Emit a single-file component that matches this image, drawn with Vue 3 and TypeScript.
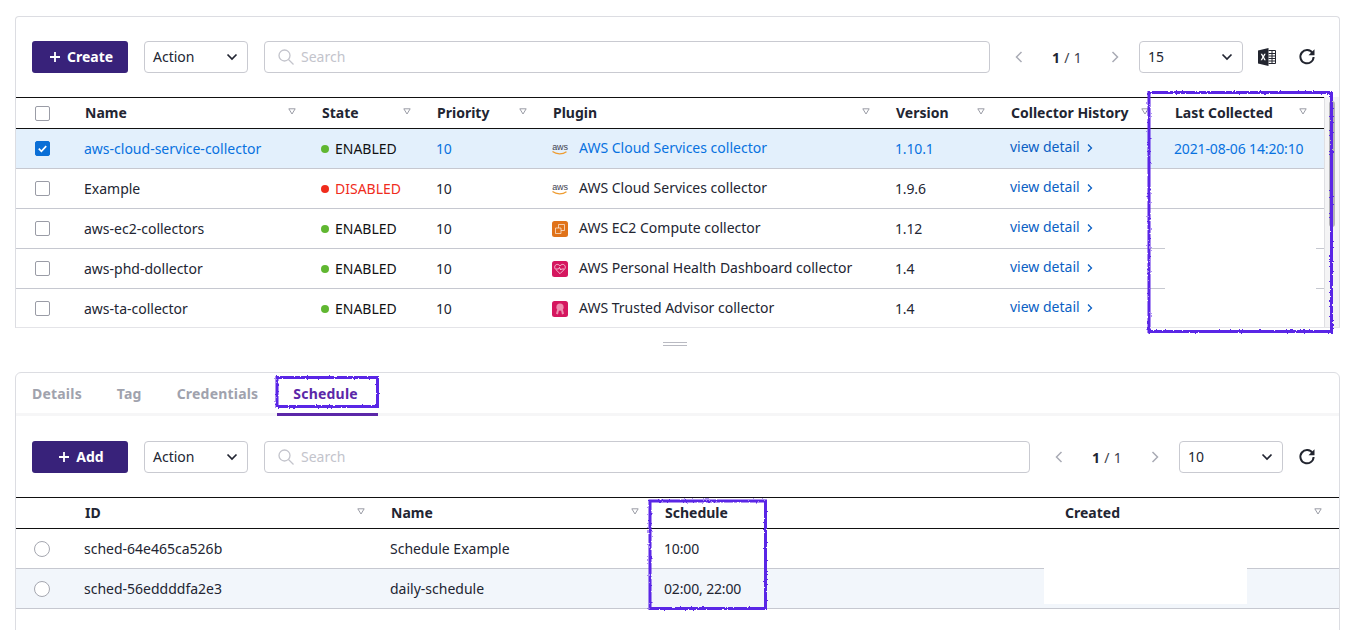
<script setup lang="ts">
type Plugin = 'aws' | 'ec2' | 'health' | 'advisor'

interface Collector {
  name: string
  state: string
  priority: number
  plugin: string
  icon: Plugin
  version: string
  last: string
  selected?: boolean
}

const collectors: Collector[] = [
  { name: 'aws-cloud-service-collector', state: 'ENABLED', priority: 10, plugin: 'AWS Cloud Services collector', icon: 'aws', version: '1.10.1', last: '2021-08-06 14:20:10', selected: true },
  { name: 'Example', state: 'DISABLED', priority: 10, plugin: 'AWS Cloud Services collector', icon: 'aws', version: '1.9.6', last: '' },
  { name: 'aws-ec2-collectors', state: 'ENABLED', priority: 10, plugin: 'AWS EC2 Compute collector', icon: 'ec2', version: '1.12', last: '' },
  { name: 'aws-phd-dollector', state: 'ENABLED', priority: 10, plugin: 'AWS Personal Health Dashboard collector', icon: 'health', version: '1.4', last: '' },
  { name: 'aws-ta-collector', state: 'ENABLED', priority: 10, plugin: 'AWS Trusted Advisor collector', icon: 'advisor', version: '1.4', last: '' },
]

const topHeaders = ['Name', 'State', 'Priority', 'Plugin', 'Version', 'Collector History', 'Last Collected']
const tabs = ['Details', 'Tag', 'Credentials', 'Schedule']

const schedules = [
  { id: 'sched-64e465ca526b', name: 'Schedule Example', time: '10:00' },
  { id: 'sched-56eddddfa2e3', name: 'daily-schedule', time: '02:00, 22:00' },
]
</script>

<template>
  <div class="page">
    <section class="card top-card">
      <div class="toolbar">
        <button class="btn">
          <svg class="plus" viewBox="0 0 10 10"><path d="M5 0v10M0 5h10" /></svg><span class="btn-label">Create</span>
        </button>
        <div class="select action">Action
          <svg class="caret" viewBox="0 0 12 8"><path d="M1.500 1.500 6 6l4.500-4.500" /></svg>
        </div>
        <div class="search">
          <svg class="lens" viewBox="0 0 18 18"><circle cx="7.500" cy="7.500" r="5.500" /><path d="m11.500 11.500 5 5" /></svg>
          Search
        </div>
        <div class="pager">
          <svg class="chev" viewBox="0 0 8 12"><path d="M6.500 1 1.500 6l5 5" /></svg>
          <span class="page-no"><b>1</b> / 1</span>
          <svg class="chev" viewBox="0 0 8 12"><path d="m1.500 1 5 5-5 5" /></svg>
        </div>
        <div class="select size">15
          <svg class="caret" viewBox="0 0 12 8"><path d="M1.500 1.500 6 6l4.500-4.500" /></svg>
        </div>
        <svg class="excel" viewBox="0 0 18 18">
          <path fill="#22252f" d="M0 2.400 10.500 0v18L0 15.600z" />
          <path fill="#fff" d="M2.700 5.800h1.500l1 2 1-2h1.500L6 9l1.800 3.200H6.300l-1.100-2.100-1.100 2.100H2.600L4.400 9z" />
          <path fill="none" stroke="#22252f" stroke-width="1" d="M10.500 2.500h7v13h-7M10.500 5.500h7M10.500 8h7M10.500 10.500h7M10.500 13h7M14 2.500v13" />
        </svg>
        <svg class="refresh" viewBox="0 0 18 18">
          <path d="M14.600 5.200A6.600 6.600 0 1 0 15.600 9" />
          <path class="head" d="M16.500 1.200v6h-6z" />
        </svg>
      </div>

      <div class="table-wrap">
        <div class="table-clip">
          <table class="grid">
            <colgroup>
              <col style="width: 53px" /><col style="width: 237px" /><col style="width: 115px" /><col style="width: 116px" />
              <col style="width: 343px" /><col style="width: 115px" /><col style="width: 164px" /><col />
            </colgroup>
            <thead>
              <tr>
                <th class="check-cell"><span class="check"></span></th>
                <th v-for="h in topHeaders" :key="h" :class="{ 'last-head': h === 'Last Collected' }">
                  <div class="th-in">
                    <span>{{ h }}</span>
                    <svg class="sort" viewBox="0 0 8 7"><path d="M.8.8h6.400L4 6z" /></svg>
                  </div>
                </th>
              </tr>
            </thead>
            <tbody>
              <tr v-for="c in collectors" :key="c.name" :class="{ selected: c.selected }">
                <td class="check-cell">
                  <span class="check" :class="{ on: c.selected }">
                    <svg v-if="c.selected" viewBox="0 0 14 14"><path d="m3 7.200 2.800 2.800L11 4.400" /></svg>
                  </span>
                </td>
                <td>{{ c.name }}</td>
                <td>
                  <span class="dot" :class="c.state === 'ENABLED' ? 'green' : 'red'"></span>
                  <span :class="c.state === 'ENABLED' ? 'enabled' : 'disabled'">{{ c.state }}</span>
                </td>
                <td class="num">{{ c.priority }}</td>
                <td>
                  <div class="plugin">
                    <span v-if="c.icon === 'aws'" class="ico aws">aws
                      <svg viewBox="0 0 16 4"><path d="M.5.6C4.500 3.600 10.500 3.600 14.500.8" /></svg>
                    </span>
                    <svg v-else-if="c.icon === 'ec2'" class="ico" viewBox="0 0 16 16">
                      <rect width="16" height="16" rx="2.500" fill="#e0731a" />
                      <path fill="none" stroke="#fff" stroke-width=".9" stroke-opacity=".7" d="M3.500 7h5.500v5.500H3.500zM6.500 7V3.500h6v6H9" />
                    </svg>
                    <svg v-else-if="c.icon === 'health'" class="ico" viewBox="0 0 16 16">
                      <rect width="16" height="16" rx="2.500" fill="#d5175f" />
                      <path fill="none" stroke="#fff" stroke-width=".8" stroke-opacity=".85" d="M8 12.700 3.300 8C1.800 5.800 3.300 3.400 5.300 3.400 6.600 3.400 7.500 4.200 8 5c.5-.8 1.400-1.600 2.700-1.600 2 0 3.500 2.400 2 4.600zM4 8h2.500l1-1.600 1.200 2.600.8-1h2.500" />
                    </svg>
                    <svg v-else class="ico" viewBox="0 0 16 16">
                      <rect width="16" height="16" rx="2.500" fill="#d5175f" />
                      <circle cx="8" cy="6.200" r="3.600" fill="#ee8fb0" />
                      <path fill="#ee8fb0" d="M5 9h2l-1 4.500-2-.7zM9 9h2l1 3.800-2 .7z" />
                    </svg>
                    <span class="plugin-name">{{ c.plugin }}</span>
                  </div>
                </td>
                <td class="num">{{ c.version }}</td>
                <td>
                  <a class="detail">view detail
                    <svg viewBox="0 0 6 10"><path d="m1 1.500 3.500 3.500L1 8.500" /></svg>
                  </a>
                </td>
                <td class="num">{{ c.last }}</td>
              </tr>
            </tbody>
          </table>
        </div>
        <div class="rail"><div class="thumb"></div></div>
      </div>
    </section>

    <div class="handle"><span></span><span></span></div>

    <section class="card bottom-card">
      <nav class="tabs">
        <a v-for="t in tabs" :key="t" class="tab" :class="{ active: t === 'Schedule' }">{{ t }}</a>
      </nav>

      <div class="toolbar">
        <button class="btn">
          <svg class="plus" viewBox="0 0 10 10"><path d="M5 0v10M0 5h10" /></svg><span class="btn-label">Add</span>
        </button>
        <div class="select action">Action
          <svg class="caret" viewBox="0 0 12 8"><path d="M1.500 1.500 6 6l4.500-4.500" /></svg>
        </div>
        <div class="search">
          <svg class="lens" viewBox="0 0 18 18"><circle cx="7.500" cy="7.500" r="5.500" /><path d="m11.500 11.500 5 5" /></svg>
          Search
        </div>
        <div class="pager">
          <svg class="chev" viewBox="0 0 8 12"><path d="M6.500 1 1.500 6l5 5" /></svg>
          <span class="page-no"><b>1</b> / 1</span>
          <svg class="chev" viewBox="0 0 8 12"><path d="m1.500 1 5 5-5 5" /></svg>
        </div>
        <div class="select size">10
          <svg class="caret" viewBox="0 0 12 8"><path d="M1.500 1.500 6 6l4.500-4.500" /></svg>
        </div>
        <svg class="refresh" viewBox="0 0 18 18">
          <path d="M14.600 5.200A6.600 6.600 0 1 0 15.600 9" />
          <path class="head" d="M16.500 1.200v6h-6z" />
        </svg>
      </div>

      <table class="grid sched">
        <colgroup>
          <col style="width: 53px" /><col style="width: 306px" /><col style="width: 274px" />
          <col style="width: 400px" /><col />
        </colgroup>
        <thead>
          <tr>
            <th></th>
            <th><div class="th-in"><span>ID</span><svg class="sort" viewBox="0 0 8 7"><path d="M.8.8h6.400L4 6z" /></svg></div></th>
            <th><div class="th-in"><span>Name</span><svg class="sort" viewBox="0 0 8 7"><path d="M.8.8h6.400L4 6z" /></svg></div></th>
            <th><div class="th-in"><span>Schedule</span></div></th>
            <th class="last-head"><div class="th-in"><span>Created</span><svg class="sort" viewBox="0 0 8 7"><path d="M.8.8h6.400L4 6z" /></svg></div></th>
          </tr>
        </thead>
        <tbody>
          <tr v-for="(s, i) in schedules" :key="s.id" :class="{ hovered: i === 1 }">
            <td class="check-cell"><span class="radio"></span></td>
            <td>{{ s.id }}</td>
            <td>{{ s.name }}</td>
            <td class="num">{{ s.time }}</td>
            <td></td>
          </tr>
        </tbody>
      </table>
    </section>

    <!-- redactions and marker pen boxes drawn on top of the screenshot -->
    <svg class="marks" viewBox="0 0 1357 630" width="1357" height="630">
      <defs>
        <filter id="pen" x="-5%" y="-5%" width="110%" height="110%">
          <feTurbulence type="fractalNoise" baseFrequency="0.45" numOctaves="2" seed="4" />
          <feDisplacementMap in="SourceGraphic" scale="2.600" />
          <feGaussianBlur stdDeviation="0.450" />
        </filter>
      </defs>
      <rect x="1165" y="209" width="151" height="118" fill="#fff" />
      <rect x="1044" y="568" width="203" height="36" fill="#fff" />
      <g filter="url(#pen)" fill="none" stroke="#5a26e6" stroke-width="3">
        <rect x="1149" y="92.500" width="182.500" height="239" />
        <rect x="277" y="377.500" width="100.500" height="29" />
        <rect x="650" y="501" width="115.500" height="107.500" />
      </g>
    </svg>
  </div>
</template>

<style scoped>
.page {
  position: relative;
  width: 1357px;
  height: 630px;
  overflow: hidden;
  padding: 16px 17px 0 15px;
  box-sizing: border-box;
  font-family: "Noto Sans", "Liberation Sans", sans-serif;
  font-size: 14px;
  color: #222532;
}
.card {
  border: 1px solid #dcdde2;
  box-sizing: border-box;
  background: #fff;
}
.top-card {
  height: 312px;
  border-bottom-color: #e4e4e8;
  border-radius: 4px 4px 0 0;
  padding-top: 24px;
}
.bottom-card {
  height: 300px;
  border-radius: 6px 6px 0 0;
}
.toolbar {
  display: flex;
  align-items: center;
  height: 32px;
  padding: 0 23px 0 16px;
}
.btn {
  width: 96px;
  height: 32px;
  border: 0;
  border-radius: 3px;
  background: #38227a;
  color: #fff;
  font: 700 14px "Noto Sans", sans-serif;
  padding: 0 0 0 3px;
  margin-right: 16px;
  display: flex;
  align-items: center;
  justify-content: center;
}
.btn-label {
  margin-bottom: 2px;
}
.plus {
  width: 10px;
  height: 10px;
  margin-right: 7px;
  fill: none;
  stroke: #fff;
  stroke-width: 1.800;
}
.select {
  position: relative;
  height: 32px;
  width: 104px;
  box-sizing: border-box;
  border: 1px solid #c9cad1;
  border-radius: 4px;
  padding-left: 8px;
  line-height: 30px;
  color: #222532;
  flex: none;
}
.action {
  margin-right: 16px;
}
.caret {
  position: absolute;
  right: 9px;
  top: 11px;
  width: 12px;
  height: 8px;
  fill: none;
  stroke: #222532;
  stroke-width: 1.700;
}
.search {
  flex: 1;
  height: 32px;
  box-sizing: border-box;
  border: 1px solid #c9cad1;
  border-radius: 4px;
  padding-left: 36px;
  position: relative;
  line-height: 30px;
  color: #c3c4cc;
}
.lens {
  position: absolute;
  left: 12px;
  top: 6px;
  width: 18px;
  height: 18px;
  fill: none;
  stroke: #c3c4cc;
  stroke-width: 1.300;
}
.pager {
  width: 149px;
  flex: none;
  display: flex;
  align-items: center;
  justify-content: space-between;
  padding: 0 20px 0 25px;
  box-sizing: border-box;
}
.chev {
  width: 8px;
  height: 12px;
  fill: none;
  stroke: #a9abb5;
  stroke-width: 1.500;
}
.page-no {
  color: #3b3e4a;
  letter-spacing: .3px;
}
.page-no b {
  color: #222532;
}
.excel {
  width: 18px;
  height: 18px;
  margin-left: 15px;
  flex: none;
}
.refresh {
  width: 18px;
  height: 18px;
  margin-left: 15px;
  flex: none;
  fill: none;
  stroke: #22252f;
  stroke-width: 2;
}
.excel + .refresh {
  margin-left: 22px;
}
.refresh .head {
  fill: #22252f;
  stroke: none;
}
.table-wrap {
  display: flex;
  margin-top: 24px;
  height: 230px;
}
.table-clip {
  width: 1308px;
  height: 230px;
  overflow: hidden;
  flex: none;
}
.rail {
  flex: 1;
  background: #f4f4f5;
  border-left: 1px solid #dfdfe3;
  position: relative;
}
.thumb {
  position: absolute;
  top: 4px;
  left: 4px;
  width: 6px;
  height: 126px;
  border-radius: 3px;
  background: #b5b5b8;
}
.grid {
  width: 100%;
  table-layout: fixed;
  border-collapse: separate;
  border-spacing: 0;
}
.grid th {
  height: 32px;
  padding: 0;
  box-sizing: border-box;
  border-top: 1px solid #111;
  border-bottom: 1px solid #111;
  font-weight: 700;
  text-align: left;
  color: #222532;
}
.th-in {
  display: flex;
  align-items: center;
  justify-content: space-between;
  padding: 0 10px 2px 16px;
}
.sort {
  width: 8px;
  height: 7px;
  margin-top: -1px;
  fill: none;
  stroke: #9a9ca6;
  stroke-width: 1;
  flex: none;
}
.last-head .th-in {
  padding-right: 17px;
}
.grid td {
  height: 40px;
  padding: 0 0 0 15px;
  box-sizing: border-box;
  border-bottom: 1px solid #c6c8d0;
  white-space: nowrap;
  color: #222532;
}
.grid td.num {
  letter-spacing: -.15px;
}
.grid .check-cell {
  padding: 0;
  text-align: left;
}
.check {
  display: block;
  width: 13px;
  height: 13px;
  margin-left: 19px;
  border: 1px solid #9a9ca6;
  border-radius: 2px;
  background: #fff;
}
.check.on {
  background: #0b6fd6;
  border-color: #0b6fd6;
}
.check svg {
  display: block;
  width: 13px;
  height: 13px;
  fill: none;
  stroke: #fff;
  stroke-width: 1.800;
}
.radio {
  display: block;
  width: 14px;
  height: 14px;
  margin-left: 18px;
  border-radius: 50%;
  border: 1px solid #a5a7b0;
  background: #fff;
}
.dot {
  display: inline-block;
  width: 8px;
  height: 8px;
  border-radius: 50%;
  margin: 0 6px 0 0;
  vertical-align: 1px;
}
.green {
  background: #60b731;
}
.red {
  background: #f02c1c;
}
.enabled {
  color: #111;
}
.disabled {
  color: #f02c1c;
}
.plugin {
  display: flex;
  align-items: center;
}
.plugin-name {
  position: relative;
  top: -1px;
}
.ico {
  width: 16px;
  height: 16px;
  margin-right: 11px;
  flex: none;
}
.aws {
  display: block;
  box-sizing: border-box;
  padding-top: 2px;
  font: 400 9px/8px "Liberation Sans", sans-serif;
  color: #3d4150;
  text-align: center;
  letter-spacing: -.2px;
}
.aws svg {
  display: block;
  width: 16px;
  height: 4px;
  fill: none;
  stroke: #ee9b2f;
  stroke-width: 1.200;
}
.detail {
  display: inline-flex;
  align-items: center;
  color: #0a5fc4;
  margin-top: -4px;
  vertical-align: middle;
  position: relative;
  top: -2px;
}
.detail svg {
  width: 6px;
  height: 10px;
  margin-left: 7px;
  margin-top: 3px;
  fill: none;
  stroke: #0a5fc4;
  stroke-width: 1.300;
}
.selected td {
  background: #e3f0fc;
  color: #0872e0;
}
.selected .enabled {
  color: #111;
}
.hovered td {
  background: #f2f6fb;
}
.handle {
  height: 44px;
  display: flex;
  flex-direction: column;
  align-items: center;
  gap: 2px;
  padding: 14px 5px 0 0;
  box-sizing: border-box;
}
.handle span {
  width: 24px;
  height: 1px;
  background: #b9bac2;
}
.tabs {
  display: flex;
  height: 40px;
  border-bottom: 3px solid #f6f6f7;
  margin-bottom: 25px;
}
.tab {
  position: relative;
  box-sizing: border-box;
  padding: 11px 16px 0;
  font-weight: 700;
  line-height: 19px;
  letter-spacing: .2px;
  color: #a0a2ad;
  margin-right: 3px;
  height: 40px;
}
.tab.active {
  color: #5b27a8;
  padding-right: 20px;
}
.tab.active::after {
  content: "";
  position: absolute;
  left: 0;
  right: 0;
  bottom: -3px;
  height: 3px;
  background: #5b27a8;
}
.sched {
  margin-top: 24px;
}
.marks {
  position: absolute;
  left: 0;
  top: 0;
  pointer-events: none;
}
</style>

<style>
html, body {
  margin: 0;
  background: #fff;
  overflow: hidden;
}
</style>
